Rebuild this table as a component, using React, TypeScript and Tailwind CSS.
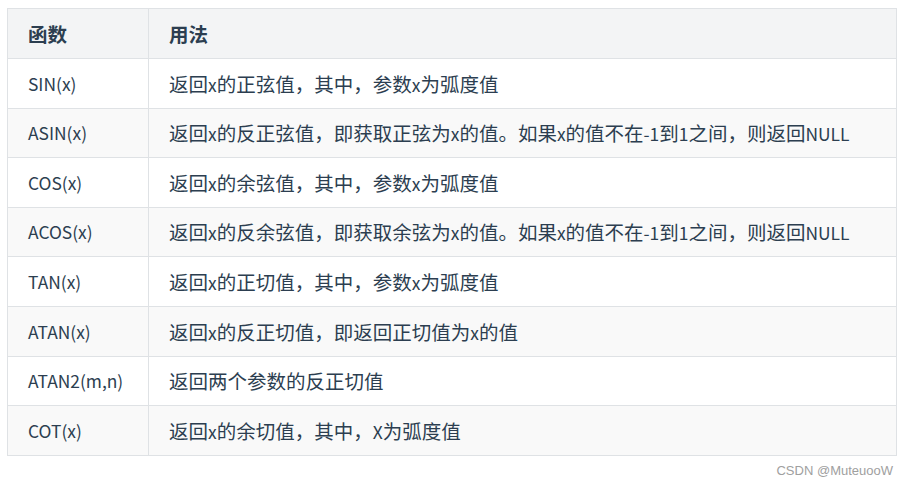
const rows: [string, string][] = [
  ["SIN(x)", "返回x的正弦值，其中，参数x为弧度值"],
  ["ASIN(x)", "返回x的反正弦值，即获取正弦为x的值。如果x的值不在-1到1之间，则返回NULL"],
  ["COS(x)", "返回x的余弦值，其中，参数x为弧度值"],
  ["ACOS(x)", "返回x的反余弦值，即获取余弦为x的值。如果x的值不在-1到1之间，则返回NULL"],
  ["TAN(x)", "返回x的正切值，其中，参数x为弧度值"],
  ["ATAN(x)", "返回x的反正切值，即返回正切值为x的值"],
  ["ATAN2(m,n)", "返回两个参数的反正切值"],
  ["COT(x)", "返回x的余切值，其中，X为弧度值"],
];

// latin runs stay at the smaller size, CJK gets a bit larger
function Mixed({ text }: { text: string }) {
  const parts = text.match(/[\x20-\x7e]+|[^\x20-\x7e]+/g) ?? [];
  return (
    <>
      {parts.map((p, i) =>
        /^[\x20-\x7e]+$/.test(p) ? (
          <span key={i} className="text-[17.4px]">{p}</span>
        ) : (
          <span key={i}>{p}</span>
        )
      )}
    </>
  );
}

export default function App() {
  return (
    <div className="w-[908px] h-[483px] bg-white pt-2 pl-[7px] font-['Noto_Sans_CJK_SC',sans-serif] text-[#2c3e50]">
      <table className="w-[890px] border-collapse text-[19.5px] leading-none">
        <thead>
          <tr className="bg-[#f3f4f5] h-[50px]">
            <th className="border border-[#dfe2e5] w-[141px] pl-5 text-left font-bold">函数</th>
            <th className="border border-[#dfe2e5] pl-5 text-left font-bold">用法</th>
          </tr>
        </thead>
        <tbody>
          {rows.map(([fn, use], i) => (
            <tr key={fn} className={i % 2 === 1 ? "bg-[#f9f9f9] h-[49.6px]" : "bg-white h-[49.6px]"}>
              <td className="border border-[#dfe2e5] pl-5 text-[17.4px]">{fn}</td>
              <td className="border border-[#dfe2e5] pl-5 whitespace-nowrap">
                <Mixed text={use} />
              </td>
            </tr>
          ))}
        </tbody>
      </table>
      <div className="w-[886px] text-right mt-[5px] text-[13px] text-[#a0a0a0] font-['Liberation_Sans',sans-serif]">
        CSDN @MuteuooW
      </div>
    </div>
  );
}
